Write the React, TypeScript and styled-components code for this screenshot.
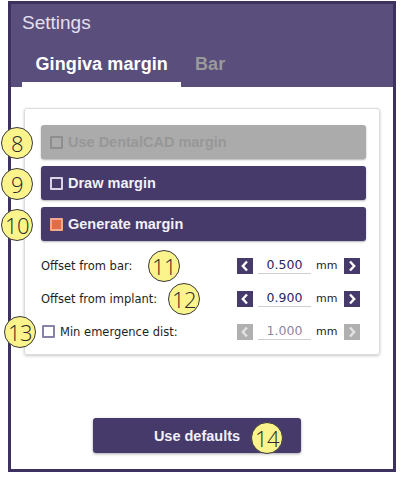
import styled, { createGlobalStyle } from 'styled-components';

const GlobalStyle = createGlobalStyle`
  html, body {
    margin: 0;
    padding: 0;
    background: #ffffff;
  }
  * {
    box-sizing: border-box;
  }
`;

const Page = styled.div`
  position: relative;
  width: 400px;
  height: 477px;
  padding: 1px 0 0 8px;
`;

const Frame = styled.div`
  width: 388px;
  height: 471px;
  border: 3px solid #3d325f;
  display: flex;
  flex-direction: column;
`;

const Header = styled.div`
  height: 83px;
  background-color: #5a4e7c;
  display: flex;
  flex-direction: column;
  padding: 7px 0 0 11px;
`;

const Title = styled.div`
  font-family: 'Liberation Sans', Arial, sans-serif;
  font-size: 19px;
  line-height: 24px;
  color: #e4e0f0;
`;

const Tabs = styled.div`
  display: flex;
  margin-top: auto;
`;

const Tab = styled.div<{ $active?: boolean }>`
  height: 40px;
  padding: 0 13.5px;
  line-height: 34px;
  font-family: 'Liberation Sans', Arial, sans-serif;
  font-weight: bold;
  font-size: 18px;
  letter-spacing: 0.1px;
  color: ${(p) => (p.$active ? '#ffffff' : '#9a9a9a')};
  border-bottom: 5px solid ${(p) => (p.$active ? '#ffffff' : 'transparent')};
`;

const Body = styled.div`
  flex: 1;
  background: #ffffff;
  display: flex;
  flex-direction: column;
  padding: 21px 13px 16px 13px;
`;

const Card = styled.div`
  border: 1px solid #dcdcdc;
  border-radius: 3px;
  box-shadow: 0 1px 3px rgba(0, 0, 0, 0.22);
  padding: 16px 13px 6px 16px;
  display: flex;
  flex-direction: column;
  gap: 7px;
`;

const ToggleButton = styled.div<{ $disabled?: boolean }>`
  height: 34px;
  border-radius: 3px;
  background-color: ${(p) => (p.$disabled ? '#ababab' : '#463a6b')};
  box-shadow: 0 1px 2px rgba(0, 0, 0, 0.3);
  display: flex;
  align-items: center;
  gap: 5px;
  padding-left: 9px;
  font-family: 'Liberation Sans', Arial, sans-serif;
  font-weight: bold;
  font-size: 14.5px;
  color: ${(p) => (p.$disabled ? '#979797' : '#f2f0f8')};
`;

const Check = styled.span<{ $checked?: boolean; $tone?: 'light' | 'grey' | 'dark' }>`
  width: 13px;
  height: 13px;
  flex: none;
  border: 2px solid
    ${(p) =>
      p.$checked ? '#f4a98e' : p.$tone === 'grey' ? '#8e8e8e' : p.$tone === 'dark' ? '#8a82a6' : '#d9d5e6'};
  background-color: ${(p) => (p.$checked ? '#e36c45' : 'transparent')};
  border-radius: 1px;
  margin-left: ${(p) => (p.$tone === 'dark' ? 1 : 0)}px;
`;

const Rows = styled.div`
  display: flex;
  flex-direction: column;
  margin-top: 1px;
`;

const Row = styled.div`
  height: 33px;
  display: flex;
  align-items: center;
  padding-right: 6px;
`;

const Label = styled.span<{ $inset?: number }>`
  font-family: 'DejaVu Sans', Tahoma, sans-serif;
  font-size: 11.5px;
  color: #1e1e1e;
  margin-left: ${(p) => p.$inset ?? 0}px;
`;

const Spinner = styled.div`
  margin-left: auto;
  display: flex;
  align-items: center;
`;

const Arrow = styled.span<{ $disabled?: boolean }>`
  width: 16px;
  height: 16px;
  background-color: ${(p) => (p.$disabled ? '#b0b0b0' : '#463a6b')};
  display: flex;
  align-items: center;
  justify-content: center;
`;

const Value = styled.span<{ $disabled?: boolean }>`
  width: 53px;
  margin: 0 5px;
  text-align: center;
  border-bottom: 1px solid #cfcfcf;
  font-family: 'DejaVu Sans', Tahoma, sans-serif;
  font-size: 12.5px;
  line-height: 16px;
  color: ${(p) => (p.$disabled ? '#8a8a9a' : '#2d2560')};
`;

const Unit = styled.span`
  width: 28px;
  font-family: 'DejaVu Sans', Tahoma, sans-serif;
  font-size: 11px;
  color: #222;
`;

const DefaultsButton = styled.div`
  margin-top: auto;
  align-self: center;
  margin-right: 10px;
  width: 208px;
  height: 35px;
  border-radius: 3px;
  background-color: #463a6b;
  box-shadow: 0 1px 3px rgba(0, 0, 0, 0.35);
  display: flex;
  align-items: center;
  justify-content: center;
  font-family: 'Liberation Sans', Arial, sans-serif;
  font-weight: bold;
  font-size: 14.5px;
  color: #f2f0f8;
`;

const Badge = styled.div`
  position: absolute;
  width: 32px;
  height: 32px;
  border-radius: 50%;
  border: 1.5px solid #3a3a3a;
  background-color: #fbf38c;
  display: flex;
  align-items: center;
  justify-content: center;
  font-family: 'Open Sans', Lato, sans-serif;
  font-weight: 300;
  font-size: 22px;
  letter-spacing: -0.5px;
  color: #2a2a2a;
`;

const Chevron = ({ dir, light }: { dir: 'left' | 'right'; light?: boolean }) => (
  <svg width="10" height="12" viewBox="0 0 10 12">
    <polyline
      points={dir === 'left' ? '7,1.5 2.8,6 7,10.5' : '3,1.5 7.2,6 3,10.5'}
      fill="none"
      stroke={light ? '#e2e2e2' : '#ffffff'}
      strokeWidth="2.4"
    />
  </svg>
);

const NumberInput = ({ value, disabled }: { value: string; disabled?: boolean }) => (
  <Spinner>
    <Arrow $disabled={disabled}>
      <Chevron dir="left" light={disabled} />
    </Arrow>
    <Value $disabled={disabled}>{value}</Value>
    <Unit>mm</Unit>
    <Arrow $disabled={disabled}>
      <Chevron dir="right" light={disabled} />
    </Arrow>
  </Spinner>
);

const badges = [
  { n: 8, x: 17, y: 143 },
  { n: 9, x: 17, y: 184 },
  { n: 10, x: 17, y: 225 },
  { n: 11, x: 164, y: 266 },
  { n: 12, x: 184, y: 299 },
  { n: 13, x: 20, y: 332 },
  { n: 14, x: 267, y: 438 },
];

export default function App() {
  return (
    <>
      <GlobalStyle />
      <Page>
        <Frame>
          <Header>
            <Title>Settings</Title>
            <Tabs>
              <Tab $active>Gingiva margin</Tab>
              <Tab>Bar</Tab>
            </Tabs>
          </Header>
          <Body>
            <Card>
              <ToggleButton $disabled>
                <Check $tone="grey" />
                Use DentalCAD margin
              </ToggleButton>
              <ToggleButton>
                <Check />
                Draw margin
              </ToggleButton>
              <ToggleButton>
                <Check $checked />
                Generate margin
              </ToggleButton>
              <Rows>
                <Row>
                  <Label>Offset from bar:</Label>
                  <NumberInput value="0.500" />
                </Row>
                <Row>
                  <Label>Offset from implant:</Label>
                  <NumberInput value="0.900" />
                </Row>
                <Row>
                  <Check $tone="dark" />
                  <Label $inset={5}>Min emergence dist:</Label>
                  <NumberInput value="1.000" disabled />
                </Row>
              </Rows>
            </Card>
            <DefaultsButton>Use defaults</DefaultsButton>
          </Body>
        </Frame>
        {badges.map((b) => (
          <Badge key={b.n} style={{ left: b.x - 16, top: b.y - 16 }}>
            {b.n}
          </Badge>
        ))}
      </Page>
    </>
  );
}
